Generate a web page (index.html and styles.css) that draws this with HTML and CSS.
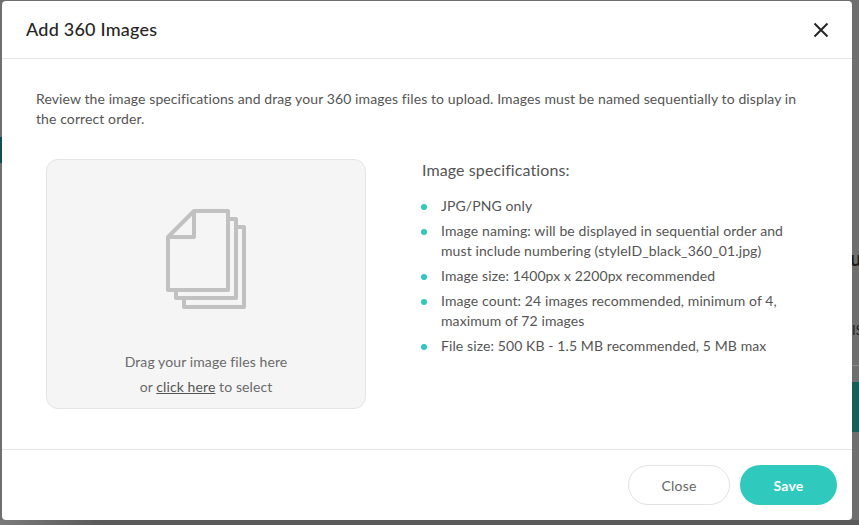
FILE: index.html
```html
<!DOCTYPE html>
<html lang="en">
<head>
<meta charset="utf-8">
<title>Add 360 Images</title>
<link rel="stylesheet" href="styles.css">
</head>
<body>
<div class="backdrop-teal-left"></div>
<div class="backdrop-teal-right"></div>
<div class="backdrop-rule"></div>
<div class="backdrop-text-u">u</div>
<div class="backdrop-text-s">IS</div>
<main class="modal">
  <header class="modal-header">
    <h1 class="modal-title">Add 360 Images</h1>
    <button class="close-x" aria-label="Close">
      <svg width="16" height="16" viewBox="0 0 16 16"><path d="M1.5 1.5 14.5 14.5M14.5 1.5 1.5 14.5" stroke="#262626" stroke-width="2" fill="none"/></svg>
    </button>
  </header>
  <section class="modal-body">
    <p class="intro">Review the image specifications and drag your 360 images files to upload. Images must be named sequentially to display in the correct order.</p>
    <div class="columns">
      <div class="dropzone">
        <svg class="files-icon" width="80" height="100" viewBox="0 0 80 100">
          <g fill="none" stroke="#c1c1c1" stroke-width="4" stroke-linejoin="round">
            <path d="M62 10H70V89H10V81"/>
            <path d="M70 18H78V98H18V89"/>
            <path d="M28 2H62V81H2V28Z"/>
            <path d="M28 2V28H2"/>
          </g>
        </svg>
        <p class="drop-line">Drag your image files here</p>
        <p class="drop-line drop-line-second">or <a class="drop-link" href="#">click here</a> to select</p>
      </div>
      <div class="specs">
        <h2 class="specs-title">Image specifications:</h2>
        <ul class="spec-list">
          <li>JPG/PNG only</li>
          <li>Image naming: will be displayed in sequential order and must include numbering (styleID_black_360_01.jpg)</li>
          <li>Image size: 1400px x 2200px recommended</li>
          <li>Image count: 24 images recommended, minimum of 4, maximum of 72 images</li>
          <li>File size: 500 KB - 1.5 MB recommended, 5 MB max</li>
        </ul>
      </div>
    </div>
  </section>
  <footer class="modal-footer">
    <button class="btn btn-close">Close</button>
    <button class="btn btn-save">Save</button>
  </footer>
</main>
</body>
</html>
```

FILE: styles.css
```css
* { box-sizing: border-box; }
html, body { margin: 0; height: 525px; overflow: hidden; }
body {
  position: relative;
  background:
    linear-gradient(90deg, #7a7a7a 0, #5a5a5a 100px) left bottom / 100% 5px no-repeat,
    #6f6f6f;
  font-family: Lato, "Liberation Sans", sans-serif;
  color: #555;
  padding: 1px 7px 5px 2px;
  letter-spacing: .1px;
}
.backdrop-teal-left { position: absolute; left: 0; top: 137px; width: 2px; height: 26px; background: #124f55; }
.backdrop-teal-right { position: absolute; right: 0; top: 382px; width: 7px; height: 50px; background: #155f58; }
.backdrop-rule { position: absolute; right: 0; top: 365px; width: 7px; height: 1px; background: #8a8a8a; }
.backdrop-text-u { position: absolute; left: 850px; top: 246px; font-size: 20px; line-height: 24px; font-weight: 700; color: #1c1c1c; }
.backdrop-text-s { position: absolute; left: 852px; top: 322px; font-size: 13px; line-height: 16px; color: #1c1c1c; }
.modal {
  position: relative;
  height: 519px;
  background: #fff;
  border-radius: 4px;
  display: flex;
  flex-direction: column;
}
.modal-header {
  height: 58px;
  flex: none;
  display: flex;
  align-items: center;
  justify-content: space-between;
  padding: 0 23px 0 24px;
  border-bottom: 1px solid #e4e4e4;
}
.modal-title { margin: 0 0 2px; font-size: 18px; font-weight: 500; letter-spacing: .22px; color: #262626; }
.close-x { padding: 0; border: 0; background: none; display: flex; }
.modal-body { flex: 1; padding: 30px 34px 0; }
.intro { margin: 0; font-size: 14px; line-height: 20px; color: #555; }
.columns { display: flex; margin-top: 30px; padding-left: 10px; }
.dropzone {
  width: 320px;
  height: 250px;
  flex: none;
  background: #f5f5f5;
  border: 1px solid #e4e4e4;
  border-radius: 12px;
  display: flex;
  flex-direction: column;
  align-items: center;
  padding-top: 49px;
}
.files-icon { display: block; margin-bottom: 43px; }
.drop-line { margin: 0; font-size: 14px; line-height: 20px; color: #6a6a6a; }
.drop-line-second { margin-top: 5px; }
.drop-link { color: #555; text-decoration: underline; }
.specs { margin-left: 56px; width: 380px; }
.specs-title { margin: 0; font-size: 16px; line-height: 22px; font-weight: 400; color: #555; }
.spec-list { list-style: none; margin: 15px 0 0; padding: 0; }
.spec-list li {
  position: relative;
  padding-left: 19px;
  margin-bottom: 5px;
  font-size: 14px;
  line-height: 20px;
  color: #555;
}
.spec-list li::before {
  content: "";
  position: absolute;
  left: -1px;
  top: 8px;
  width: 6px;
  height: 6px;
  border-radius: 50%;
  background: #2fc8bb;
}
.modal-footer {
  height: 71px;
  flex: none;
  display: flex;
  justify-content: flex-end;
  align-items: flex-start;
  gap: 10px;
  padding: 15px 15px 0 0;
  border-top: 1px solid #e4e4e4;
}
.btn {
  height: 40px;
  border-radius: 20px;
  font-family: inherit;
  font-size: 14px;
  letter-spacing: .2px;
  cursor: pointer;
}
.btn-close { width: 102px; background: #fff; border: 1px solid #e2e2e2; color: #666; }
.btn-save { width: 97px; background: #30c9bd; border: 0; color: #fff; font-weight: 700; }
```
